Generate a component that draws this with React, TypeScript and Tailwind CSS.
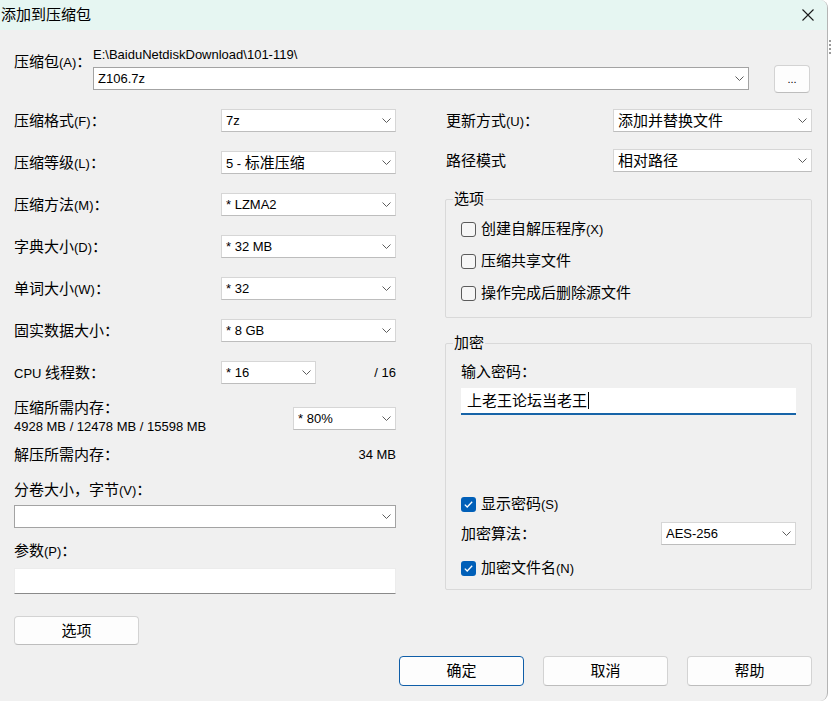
import React from "react";
import clsx from "clsx";

const CJK = /([\u2E80-\u9FFF\uFF00-\uFFEF\u3000-\u303F]+)/;

function T({ s }: { s: string }) {
  const parts = s.split(CJK);
  return (
    <>
      {parts.map((p, i) =>
        i % 2 === 1 ? (
          <span key={i} className="text-[15px]">
            {p}
          </span>
        ) : (
          <React.Fragment key={i}>{p}</React.Fragment>
        )
      )}
    </>
  );
}

function Chevron() {
  return (
    <svg width="9" height="5" viewBox="0 0 9 5" className="shrink-0">
      <path d="M0.5 0.5 L4.5 4.5 L8.5 0.5" fill="none" stroke="#5c5c5c" strokeWidth="1" />
    </svg>
  );
}

function Combo({ value, className, dark }: { value: string; className?: string; dark?: boolean }) {
  return (
    <div
      className={clsx(
        "h-[23px] shrink-0 bg-white border flex items-center pl-[4px] pr-[4px]",
        dark ? "border-[#a3a3a3]" : "border-[#d6d6d6] border-b-[#bdbdbd]",
        className
      )}
    >
      <div className="flex-1 h-[18px] whitespace-pre overflow-hidden">
        <T s={value} />
      </div>
      <Chevron />
    </div>
  );
}

function Check({ checked, label }: { checked?: boolean; label: string }) {
  return (
    <div className="flex items-center h-[18px]">
      {checked ? (
        <div className="w-[15px] h-[15px] rounded-[3px] bg-[#005fb8] flex items-center justify-center shrink-0">
          <svg width="15" height="15" viewBox="0 0 15 15">
            <path d="M3.8 7.6 L6.2 10 L11.2 4.8" fill="none" stroke="#ffffff" strokeWidth="1.3" />
          </svg>
        </div>
      ) : (
        <div className="w-[15px] h-[15px] rounded-[3px] border border-[#5b5b5b] bg-[#f6f6f6] shrink-0" />
      )}
      <span className="ml-[5px] h-[18px] whitespace-nowrap">
        <T s={label} />
      </span>
    </div>
  );
}

function Btn({ label, primary, className }: { label: string; primary?: boolean; className?: string }) {
  return (
    <div
      className={clsx(
        "w-[125px] rounded-[4px] bg-[#fdfdfd] border flex items-center justify-center shrink-0",
        primary ? "border-[#0f5ea8]" : "border-[#d3d3d3] border-b-[#bdbdbd]",
        className
      )}
    >
      <div className="h-[18px]">
        <T s={label} />
      </div>
    </div>
  );
}

function L({ s, className }: { s: string; className?: string }) {
  return (
    <div className={clsx("h-[18px] whitespace-nowrap", className)}>
      <T s={s} />
    </div>
  );
}

function Row({ label, value }: { label: string; value: string }) {
  return (
    <div className="flex items-center h-[23px]">
      <L s={label} className="flex-1" />
      <Combo value={value} className="w-[175px]" />
    </div>
  );
}

function Group({ title, className, children }: { title: string; className?: string; children: React.ReactNode }) {
  return (
    <div className={clsx("relative border border-[#d9d9d9] rounded-[2px] flex flex-col", className)}>
      <div className="absolute left-[7px] -top-[10px] px-[1px] h-[18px] bg-[#f0f0f0] leading-[18px]">
        <T s={title} />
      </div>
      {children}
    </div>
  );
}

export default function App() {
  return (
    <div className="w-[831px] h-[701px] bg-white flex font-['Liberation_Sans','Noto_Sans_CJK_SC',sans-serif] text-[13px] leading-[18px] text-black">
      <div className="w-[828px] h-[701px] shrink-0 bg-[#f0f0f0] border-r border-[#b4b4b4] rounded-r-[8px] overflow-hidden flex flex-col">
        {/* title bar */}
        <div className="h-[30px] shrink-0 bg-[#e6f6f2] flex items-center justify-between pl-[1px] pr-[13px]">
          <span className="text-[15px]">添加到压缩包</span>
          <svg width="12" height="12" viewBox="0 0 12 12">
            <path d="M0.5 0.5 L11.5 11.5 M11.5 0.5 L0.5 11.5" stroke="#1b1b1b" strokeWidth="1.1" />
          </svg>
        </div>

        {/* archive */}
        <div className="flex pl-[14px] mt-[16px]">
          <div className="w-[79px] pt-[7px]">
            <L s="压缩包(A)：" />
          </div>
          <div className="flex flex-col">
            <div className="h-[18px] whitespace-nowrap">{"E:\\BaiduNetdiskDownload\\101-119\\"}</div>
            <div className="flex items-start mt-[3px]">
              <Combo value="Z106.7z" dark className="w-[656px]" />
              <div className="ml-[25px] -mt-[2px] w-[36px] h-[28px] rounded-[4px] bg-[#fdfdfd] border border-[#d3d3d3] border-b-[#bdbdbd] flex items-center justify-center text-[11px]">
                ...
              </div>
            </div>
          </div>
        </div>

        {/* columns */}
        <div className="flex pl-[14px] mt-[16px]">
          {/* left */}
          <div className="w-[382px] flex flex-col">
            <div className="flex flex-col gap-[19px]">
              <Row label="压缩格式(F)：" value="7z" />
              <Row label="压缩等级(L)：" value="5 - 标准压缩" />
              <Row label="压缩方法(M)：" value="* LZMA2" />
              <Row label="字典大小(D)：" value="* 32 MB" />
              <Row label="单词大小(W)：" value="* 32" />
              <Row label="固实数据大小：" value="* 8 GB" />
              <div className="flex items-center h-[23px]">
                <L s="CPU 线程数：" className="w-[207px]" />
                <Combo value="* 16" className="w-[95px]" />
                <div className="flex-1 h-[18px] text-right">/ 16</div>
              </div>
            </div>
            <div className="flex mt-[14px]">
              <div className="flex-1 flex flex-col">
                <div className="h-[19px] leading-[19px]">
                  <T s="压缩所需内存：" />
                </div>
                <div className="h-[19px] leading-[19px] whitespace-nowrap">4928 MB / 12478 MB / 15598 MB</div>
              </div>
              <Combo value="* 80%" className="w-[103px] mt-[9px]" />
            </div>
            <div className="flex justify-between mt-[10px] h-[18px]">
              <L s="解压所需内存：" />
              <div className="h-[18px]">34 MB</div>
            </div>
            <L s="分卷大小，字节(V)：" className="mt-[17px]" />
            <Combo value="" dark className="mt-[6px]" />
            <L s="参数(P)：" className="mt-[14px]" />
            <div className="mt-[8px] h-[26px] bg-white border border-[#ececec] border-b-[#8a8a8a]" />
            <Btn label="选项" className="mt-[22px] h-[29px]" />
          </div>

          {/* right */}
          <div className="ml-[49px] w-[367px] flex flex-col">
            <div className="flex items-center h-[23px] pl-[1px]">
              <L s="更新方式(U)：" className="flex-1" />
              <Combo value="添加并替换文件" className="w-[199px]" />
            </div>
            <div className="flex items-center h-[23px] pl-[1px] mt-[17px]">
              <L s="路径模式" className="flex-1" />
              <Combo value="相对路径" className="w-[199px]" />
            </div>

            <Group title="选项" className="mt-[27px] pt-[20px] pb-[15px] pl-[15px] gap-[14px]">
              <Check label="创建自解压程序(X)" />
              <Check label="压缩共享文件" />
              <Check label="操作完成后删除源文件" />
            </Group>

            <Group title="加密" className="mt-[25px] pt-[19px] pb-[12px] pl-[15px] pr-[15px]">
              <L s="输入密码：" />
              <div className="mt-[7px] h-[27px] shrink-0 bg-white border-b-2 border-[#1764a8] flex items-center pl-[6px] text-[15px]">
                <span className="h-[18px] leading-[18px]">上老王论坛当老王</span>
                <span className="w-[1px] h-[17px] bg-black ml-[1px]" />
              </div>
              <div className="mt-[80px]">
                <Check checked label="显示密码(S)" />
              </div>
              <div className="flex items-center h-[23px] mt-[9px]">
                <L s="加密算法：" className="flex-1" />
                <Combo value="AES-256" className="w-[135px]" />
              </div>
              <div className="mt-[14px]">
                <Check checked label="加密文件名(N)" />
              </div>
            </Group>
          </div>
        </div>

        {/* bottom buttons */}
        <div className="flex justify-end gap-[19px] pr-[15px] mt-[11px]">
          <Btn primary label="确定" className="h-[30px]" />
          <Btn label="取消" className="h-[30px]" />
          <Btn label="帮助" className="h-[30px]" />
        </div>
      </div>
      <div className="flex-1 flex flex-col">
        <div className="mt-[40px] flex flex-col gap-[2px] pl-[1px]">
          <div className="w-[2px] h-[2px] bg-[#9a9a9a]" />
          <div className="w-[2px] h-[2px] bg-[#9a9a9a]" />
          <div className="w-[2px] h-[2px] bg-[#9a9a9a]" />
          <div className="w-[2px] h-[2px] bg-[#9a9a9a]" />
        </div>
      </div>
    </div>
  );
}
